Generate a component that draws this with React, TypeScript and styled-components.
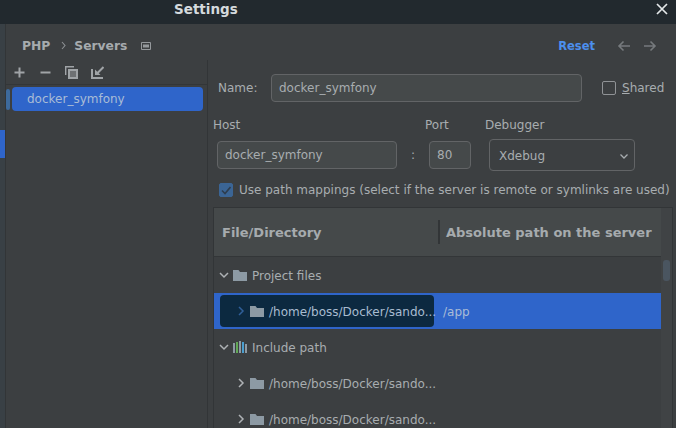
import React from "react";
import styled, { createGlobalStyle } from "styled-components";

const Global = createGlobalStyle`
  html, body { margin: 0; padding: 0; background: #3c3f41; }
  body { font-family: "DejaVu Sans", sans-serif; overflow: hidden; }
`;

const Frame = styled.div`
  width: 676px; height: 428px; overflow: hidden; display: flex; flex-direction: column;
  background: #3c3f41; color: #a8adb0; font-size: 12px;
`;
const TitleBar = styled.div`
  height: 24px; flex: none; background: #22292e; display: flex; align-items: center;
  padding: 0 8px 0 174px; justify-content: space-between;
`;
const Title = styled.span`font-size: 13.5px; font-weight: 700; color: #d5dadd; margin-top: -7px;`;
const CloseBtn = styled.svg`width: 12px; height: 12px; margin-top: -7px; display: block;`;
const Body = styled.div`flex: 1; display: flex; min-height: 0;`;
const Strip = styled.div`
  width: 5px; flex: none; border-right: 1px solid #323537; background: #394045;
  padding-top: 106px; box-sizing: content-box;
`;
const StripMark = styled.div`height: 28px; background: #2f65ca;`;
const Main = styled.div`flex: 1; display: flex; flex-direction: column; min-width: 0;`;
const Crumbs = styled.div`
  height: 36px; flex: none; display: flex; align-items: center; padding: 7px 81px 0 16px;
  box-sizing: border-box; font-weight: 700; font-size: 12.3px; color: #a6abae;
`;
const Chevron = styled.svg`width: 7px; height: 9px; margin: 0 7px 0 10px;`;
const Pad = styled.svg`width: 10px; height: 8px; margin-left: 14px;`;
const Reset = styled.span`margin-left: auto; color: #4c8fee; font-size: 11.5px;`;
const NavArrows = styled.div`display: flex; gap: 12px; margin-left: 22px; margin-right: -62px;`;
const Arrow = styled.svg`width: 14px; height: 12px;`;
const Columns = styled.div`flex: 1; display: flex; min-height: 0;`;
const Sidebar = styled.div`width: 201px; flex: none; border-right: 1px solid #323537;`;
const Tools = styled.div`
  height: 24px; display: flex; align-items: center; gap: 13px; padding-left: 7px;
  border-bottom: 1px solid #333638;
`;
const ToolIcon = styled.svg`width: 13px; height: 13px; display: block;`;
const ListRow = styled.div`display: flex; align-items: center; gap: 2px; padding: 2px 4px 0 0;`;
const ListBar = styled.div`width: 4px; height: 21px; background: #3d6a9c; border-radius: 2px;`;
const ListItem = styled.div`
  flex: 1; height: 24px; background: #2f65ca; border-radius: 4px; display: flex; align-items: center;
  padding-left: 15px; color: #a9bcd6;
`;
const Detail = styled.div`flex: 1; min-width: 0; display: flex; flex-direction: column; padding: 14px 3px 0 5px;`;
const NameRow = styled.div`display: flex; align-items: center; height: 28px; padding-left: 5px;`;
const NameLabel = styled.span`width: 53px;`;
const Input = styled.div<{ $w: number; $h?: number }>`
  width: ${p => p.$w}px; height: ${p => p.$h ?? 28}px; box-sizing: border-box; flex: none;
  background: #45494a; border: 1px solid #626466; border-radius: 4px; display: flex; align-items: center;
  padding-left: 7px; color: #a8adb0;
`;
const Check = styled.div<{ $on?: boolean }>`
  width: 14px; height: 14px; box-sizing: border-box; border-radius: 2px; flex: none;
  border: 1px solid ${p => p.$on ? "#3b6595" : "#909396"};
  background: ${p => p.$on ? "#3b6595" : "transparent"};
  display: flex; align-items: center; justify-content: center;
`;
const Shared = styled.div`display: flex; align-items: center; gap: 6px; margin-left: 20px;`;
const Underline = styled.span`text-decoration: underline;`;
const FieldLabels = styled.div`display: flex; height: 20px; margin-top: 13px; align-items: center;`;
const FieldLabel = styled.span<{ $w: number }>`width: ${p => p.$w}px; flex: none;`;
const HostRow = styled.div`display: flex; align-items: center; height: 32px; padding-left: 4px; margin-top: 4px;`;
const Colon = styled.span`width: 32px; text-align: center; flex: none;`;
const Select = styled.div`
  width: 146px; height: 32px; margin-left: 18px; box-sizing: border-box; border: 1px solid #626466;
  border-radius: 4px; display: flex; align-items: center; justify-content: space-between;
  padding: 1px 5px 0 9px; background: #3c3f41;
`;
const CheckRow = styled.div`display: flex; align-items: center; gap: 6px; height: 20px; margin: 9px 0 7px 6px; white-space: nowrap;`;
const TableWrap = styled.div`
  flex: 1; min-height: 0; display: flex; border: 1px solid #323537; border-bottom: none;
`;
const Table = styled.div`flex: 1; min-width: 0; display: flex; flex-direction: column;`;
const Header = styled.div`
  height: 48px; flex: none; display: flex; align-items: center; background: #45494a;
  border-bottom: 1px solid #333638; font-weight: 700; color: #a6abae; font-size: 13px;
`;
const HeadCell = styled.div<{ $w?: number; $pad: number }>`
  ${p => p.$w ? `width: ${p.$w}px; flex: none;` : "flex: 1;"} padding-left: ${p => p.$pad}px; box-sizing: border-box; white-space: nowrap;
`;
const HeadSep = styled.div`width: 2px; height: 24px; background: #323537; flex: none;`;
const Row = styled.div<{ $sel?: boolean }>`
  height: 36px; flex: none; display: flex; align-items: center; box-sizing: border-box;
  background: ${p => p.$sel ? "#2f65ca" : "transparent"};
`;
const TreeCell = styled.div<{ $sel?: boolean; $depth: number }>`
  width: ${p => p.$sel ? 214 : 220}px; height: ${p => p.$sel ? 32 : 36}px; flex: none; box-sizing: border-box;
  margin-left: ${p => p.$sel ? 6 : 0}px;
  padding-left: ${p => (p.$depth ? 16 : 0) + (p.$sel ? 0 : 5) + (p.$depth && !p.$sel ? 1 : 0)}px;
  background: ${p => p.$sel ? "#0c2940" : "transparent"}; border-radius: 4px;
  display: flex; align-items: center; gap: 4px; white-space: nowrap;
  color: ${p => p.$sel ? "#a9bcd0" : "#a8adb0"};
`;
const TreeLabel = styled.span`padding-top: 2px;`;
const Value = styled.span`margin-left: 9px; padding-top: 2px; color: #a9bcd6;`;
const Folder = styled.svg`width: 14px; height: 12px; flex: none; margin-right: 1px;`;
const TreeArrow = styled.svg`width: 10px; height: 10px; flex: none;`;
const ScrollTrack = styled.div`width: 11px; flex: none; background: #404345; padding: 52px 2px 0 2px; box-sizing: border-box;`;
const ScrollThumb = styled.div`height: 21px; background: #4a5560; border-radius: 3px;`;

const FolderIcon = () => (
  <Folder viewBox="0 0 14 12"><path d="M0 1h5.500l1.500 2h7v9H0z" fill="#8d9aa4" /></Folder>
);
const LibIcon = () => (
  <Folder viewBox="0 0 14 12">
    <rect x="0" y="2" width="2" height="10" fill="#8d9aa4" />
    <rect x="3" y="1" width="2" height="11" fill="#62a857" />
    <rect x="6" y="0" width="2" height="12" fill="#8d9aa4" />
    <rect x="9" y="1" width="2" height="11" fill="#4a9fd0" />
    <rect x="12" y="3" width="2" height="9" fill="#8d9aa4" />
  </Folder>
);
const Tree = ({ open, color = "#aeb2b5" }: { open?: boolean; color?: string }) => (
  <TreeArrow viewBox="0 0 10 10">
    <path d={open ? "M1 3l4 4 4-4" : "M3 1l4 4-4 4"} fill="none" stroke={color} strokeWidth="1.5" />
  </TreeArrow>
);

export default function App() {
  return (
    <Frame>
      <Global />
      <TitleBar>
        <Title>Settings</Title>
        <CloseBtn viewBox="0 0 12 12"><path d="M1 1l10 10M11 1L1 11" stroke="#e4e7e9" strokeWidth="1.7" /></CloseBtn>
      </TitleBar>
      <Body>
        <Strip><StripMark /></Strip>
        <Main>
          <Crumbs>
            <span>PHP</span>
            <Chevron viewBox="0 0 7 9"><path d="M2 1l3 3.500L2 8" fill="none" stroke="#8d9194" strokeWidth="1.1" /></Chevron>
            <span>Servers</span>
            <Pad viewBox="0 0 10 8"><path d="M.5.5h9v7h-9z" fill="none" stroke="#95999c" /><rect x="2" y="2.500" width="6" height="3" fill="#95999c" /></Pad>
            <Reset>Reset</Reset>
            <NavArrows>
              <Arrow viewBox="0 0 14 12"><path d="M13 6H2M6.500 1.500L2 6l4.500 4.500" fill="none" stroke="#767a7d" strokeWidth="1.6" /></Arrow>
              <Arrow viewBox="0 0 14 12"><path d="M1 6h11M7.500 1.500L12 6l-4.500 4.500" fill="none" stroke="#767a7d" strokeWidth="1.6" /></Arrow>
            </NavArrows>
          </Crumbs>
          <Columns>
            <Sidebar>
              <Tools>
                <ToolIcon viewBox="0 0 13 13"><path d="M6.500 1.500v10M1.500 6.500h10" stroke="#a0a4a7" strokeWidth="2" /></ToolIcon>
                <ToolIcon viewBox="0 0 13 13"><path d="M1.500 6.500h10" stroke="#a0a4a7" strokeWidth="2" /></ToolIcon>
                <ToolIcon viewBox="0 0 13 13">
                  <path d="M.7 9V.7H9" stroke="#a0a4a7" strokeWidth="1.4" fill="none" />
                  <rect x="3" y="3" width="10" height="10" fill="#a0a4a7" />
                  <path d="M5 6h6M5 8h6M5 10h6" stroke="#3c3f41" />
                </ToolIcon>
                <ToolIcon viewBox="0 0 13 13">
                  <path d="M1 3v9h11" fill="none" stroke="#a0a4a7" strokeWidth="2" />
                  <path d="M12.500 1L6 7.500" fill="none" stroke="#a0a4a7" strokeWidth="2" />
                  <path d="M4 3.500V9h5.500z" fill="#a0a4a7" />
                </ToolIcon>
              </Tools>
              <ListRow>
                <ListBar />
                <ListItem>docker_symfony</ListItem>
              </ListRow>
            </Sidebar>
            <Detail>
              <NameRow>
                <NameLabel>Name:</NameLabel>
                <Input $w={311}>docker_symfony</Input>
                <Shared>
                  <Check />
                  <span><Underline>S</Underline>hared</span>
                </Shared>
              </NameRow>
              <FieldLabels>
                <FieldLabel $w={212}>Host</FieldLabel>
                <FieldLabel $w={60}>Port</FieldLabel>
                <FieldLabel $w={100}>Debugger</FieldLabel>
              </FieldLabels>
              <HostRow>
                <Input $w={180}>docker_symfony</Input>
                <Colon>:</Colon>
                <Input $w={42}>80</Input>
                <Select>
                  Xdebug
                  <TreeArrow viewBox="0 0 10 10"><path d="M1.500 3.500L5 7l3.500-3.500" fill="none" stroke="#a8adb0" strokeWidth="1.3" /></TreeArrow>
                </Select>
              </HostRow>
              <CheckRow>
                <Check $on>
                  <svg width="10" height="9" viewBox="0 0 10 9"><path d="M1 4.500L4 7.500 9.500 1" fill="none" stroke="#2e3d4e" strokeWidth="1.6" /></svg>
                </Check>
                <span>Use path mappings (select if the server is remote or symlinks are used)</span>
              </CheckRow>
              <TableWrap>
                <Table>
                  <Header>
                    <HeadCell $w={224} $pad={8}>File/Directory</HeadCell>
                    <HeadSep />
                    <HeadCell $pad={6}>Absolute path on the server</HeadCell>
                  </Header>
                  <Row>
                    <TreeCell $depth={0}><Tree open /><FolderIcon /><TreeLabel>Project files</TreeLabel></TreeCell>
                  </Row>
                  <Row $sel>
                    <TreeCell $depth={1} $sel><Tree color="#2f5f99" /><FolderIcon /><TreeLabel>/home/boss/Docker/sando...</TreeLabel></TreeCell>
                    <Value>/app</Value>
                  </Row>
                  <Row>
                    <TreeCell $depth={0}><Tree open /><LibIcon /><TreeLabel>Include path</TreeLabel></TreeCell>
                  </Row>
                  <Row>
                    <TreeCell $depth={1}><Tree /><FolderIcon /><TreeLabel>/home/boss/Docker/sando...</TreeLabel></TreeCell>
                  </Row>
                  <Row>
                    <TreeCell $depth={1}><Tree /><FolderIcon /><TreeLabel>/home/boss/Docker/sando...</TreeLabel></TreeCell>
                  </Row>
                </Table>
                <ScrollTrack><ScrollThumb /></ScrollTrack>
              </TableWrap>
            </Detail>
          </Columns>
        </Main>
      </Body>
    </Frame>
  );
}
